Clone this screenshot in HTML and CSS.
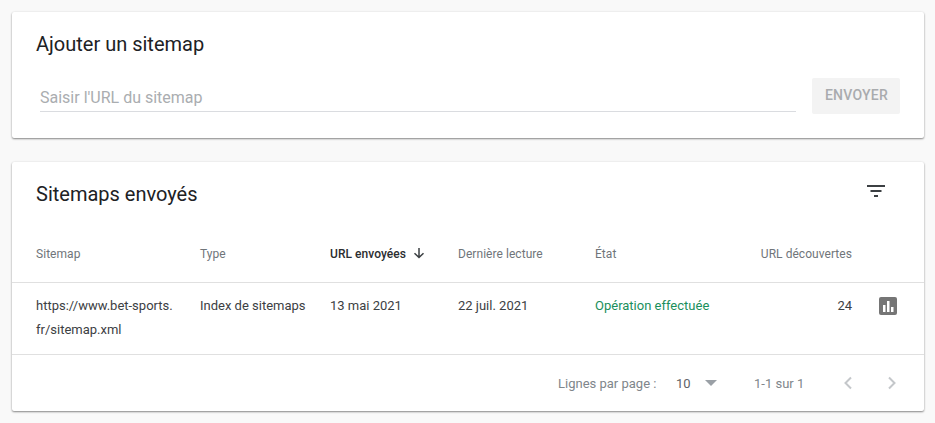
FILE: index.html
```html
<!DOCTYPE html>
<html lang="fr">
<head>
    <meta charset="UTF-8">
    <title>Sitemaps</title>
    <link rel="stylesheet" href="styles.css">
</head>
<body>

    <!-- Add a sitemap -->
    <div class="card add-card">
        <h2 class="card-title">Ajouter un sitemap</h2>
        <div class="add-row">
            <div class="url-field">Saisir l'URL du sitemap</div>
            <div class="send-btn">ENVOYER</div>
        </div>
    </div>

    <!-- Submitted sitemaps -->
    <div class="card list-card">
        <div class="list-header">
            <h2 class="card-title">Sitemaps envoyés</h2>
            <svg class="filter-icon" width="24" height="24" viewBox="0 0 24 24"><path fill="#3c4043" d="M3 6h18v2H3zM6.500 11h11v2h-11zM10 16h4v2h-4z"/></svg>
        </div>

        <div class="table-row head-row">
            <div>Sitemap</div>
            <div>Type</div>
            <div class="sorted">URL envoyées
                <svg width="12" height="12" viewBox="0 0 12 12"><path fill="none" stroke="#3c4043" stroke-width="1.500" d="M6 1v9.500M1.500 6.200 6 10.500l4.500-4.300"/></svg>
            </div>
            <div>Dernière lecture</div>
            <div>État</div>
            <div class="num">URL découvertes</div>
            <div></div>
        </div>

        <div class="table-row body-row">
            <div>https://www.bet-sports.<br>fr/sitemap.xml</div>
            <div>Index de sitemaps</div>
            <div>13 mai 2021</div>
            <div>22 juil. 2021</div>
            <div class="ok">Opération effectuée</div>
            <div class="num">24</div>
            <div class="stats-cell">
                <svg width="18" height="18" viewBox="0 0 18 18"><rect width="18" height="18" rx="2" fill="#757575"/><path fill="#fff" d="M4 8h2.500v7H4zM8 4h2.500v11H8zM12 10h2.500v5H12z"/></svg>
            </div>
        </div>

        <div class="pager">
            <span class="pager-label">Lignes par page :</span>
            <span class="pager-size">10</span>
            <span class="pager-caret"></span>
            <span class="pager-range">1-1 sur 1</span>
            <svg class="pager-prev" width="24" height="24" viewBox="0 0 24 24"><path fill="none" stroke="#c4c7ca" stroke-width="2" d="M15 6.500 9.500 12l5.500 5.500"/></svg>
            <svg class="pager-next" width="24" height="24" viewBox="0 0 24 24"><path fill="none" stroke="#c4c7ca" stroke-width="2" d="M9 6.500l5.500 5.500L9 17.500"/></svg>
        </div>
    </div>

</body>
</html>
```

FILE: styles.css
```css
body {
    font-family: Roboto, Arial, sans-serif;
    background-color: #f9f9f9;
    color: #202124;
    margin: 0;
    padding: 12px 11px 12px 12px;
}

.card {
    background-color: #fff;
    border-radius: 2px;
    box-shadow: 0 1px 2px rgba(0, 0, 0, 0.45), 0 0 3px rgba(0, 0, 0, 0.06);
}

.card-title {
    margin: 0;
    font-size: 20px;
    font-weight: 400;
    line-height: 24px;
}

.add-card {
    height: 126px;
    box-sizing: border-box;
    padding: 20px 24px 0;
    margin-bottom: 24px;
}

.add-row {
    display: flex;
    align-items: flex-start;
    margin-top: 18px;
    padding-left: 4px;
}

.url-field {
    flex: 1;
    height: 33px;
    line-height: 39px;
    font-size: 16px;
    color: #aaadb0;
    border-bottom: 1px solid #dadce0;
    margin-right: 16px;
    margin-top: 4px;
}

.send-btn {
    margin-top: 4px;
    width: 88px;
    height: 36px;
    box-sizing: border-box;
    padding-left: 1px;
    line-height: 35px;
    text-align: center;
    font-size: 14px;
    font-weight: 500;
    letter-spacing: 0.25px;
    color: #a9abae;
    background-color: #f3f3f3;
    border-radius: 2px;
}

.list-header {
    display: flex;
    justify-content: space-between;
    align-items: flex-start;
    height: 70px;
    padding: 20px 36px 0 24px;
    box-sizing: border-box;
}

.filter-icon {
    margin-top: -3px;
}

.table-row {
    display: grid;
    grid-template-columns: 164px 130px 128px 137px 1fr 95px 72px;
    padding-left: 24px;
    font-size: 13px;
    border-bottom: 1px solid #e0e0e0;
}

.head-row {
    height: 50px;
    line-height: 45px;
    font-size: 12px;
    letter-spacing: 0.05px;
    color: #70757a;
}

.sorted {
    color: #2b2d30;
    font-weight: 500;
}

.sorted svg {
    vertical-align: -1px;
    margin-left: 4px;
}

.body-row {
    line-height: 24px;
    padding-top: 11px;
    box-sizing: border-box;
    height: 72px;
    color: #3c4043;
}

.num {
    text-align: right;
    white-space: nowrap;
    justify-self: end;
}

.ok {
    color: #1a8f5c;
}

.stats-cell {
    padding: 3px 0 0 27px;
}

.pager {
    display: flex;
    align-items: center;
    height: 56px;
    font-size: 13px;
    color: #80868b;
    padding-left: 546px;
}

.pager-label {
    width: 118px;
}

.pager-size {
    width: 29px;
    color: #5f6368;
}

.pager-caret {
    width: 0;
    height: 0;
    border-left: 6px solid transparent;
    border-right: 6px solid transparent;
    border-top: 6px solid #9aa0a6;
    margin-right: 37px;
}

.pager-range {
    width: 82px;
}

.pager-prev {
    margin-right: 20px;
}
```
